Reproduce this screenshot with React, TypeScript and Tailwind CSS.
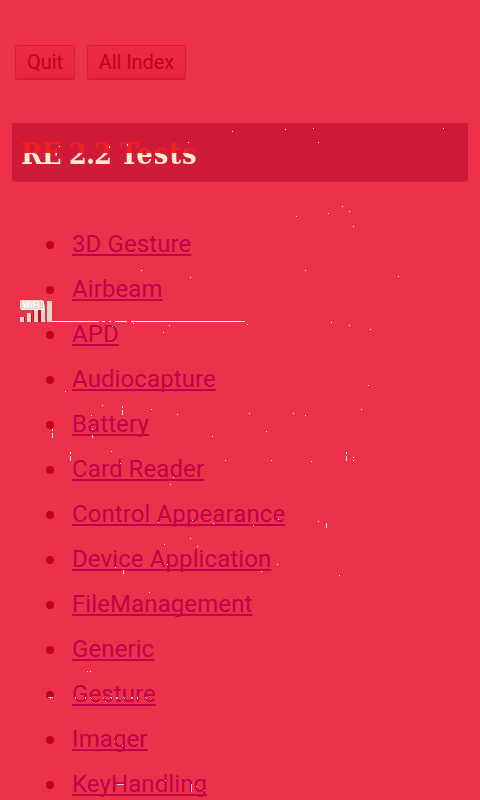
const links = [
  '3D Gesture', 'Airbeam', 'APD', 'Audiocapture', 'Battery', 'Card Reader', 'Control Appearance',
  'Device Application', 'FileManagement', 'Generic', 'Gesture', 'Imager', 'KeyHandling',
];

// Stray display pixels: x, y, width, height
const specks: number[][] = [
  [59,146,1,1],[109,146,1,2],[127,144,1,2],[188,142,1,1],[232,131,1,1],
  [285,129,1,1],[313,128,1,1],[318,142,1,1],[443,128,1,1],[342,206,1,1],[349,211,1,1],[328,213,1,1],[296,216,1,1],[353,226,1,1],
  [141,270,1,1],[190,277,1,1],[112,326,1,1],[133,323,1,1],[169,325,1,1],[163,332,1,1],
  [52,321,47,1],[102,321,3,1],[109,321,2,1],[115,321,12,1],[131,321,114,1],
  [305,270,1,1],[398,276,1,1],[247,324,1,1],[331,322,1,1],[349,325,1,1],[370,329,1,1],
  [65,391,1,1],[102,405,1,1],[122,406,1,2],[122,410,1,5],[151,409,1,1],[177,414,1,1],[91,415,1,1],[92,429,1,1],[92,435,1,3],
  [52,429,1,2],[52,433,1,5],[212,436,1,1],[111,451,1,1],[70,452,1,2],[70,456,1,5],[225,460,1,1],[120,463,1,1],[173,477,1,1],
  [368,385,1,1],[361,409,1,1],[249,413,1,1],[293,413,1,1],[305,415,1,1],[266,431,1,1],[271,460,1,1],[311,461,1,1],
  [346,452,1,2],[346,456,1,5],[353,457,1,1],[353,460,1,1],
  [170,484,1,1],[158,522,1,1],[192,520,1,1],[213,523,1,1],[190,538,1,1],[164,544,1,1],[197,546,1,1],[167,564,1,1],[115,567,1,1],[123,570,1,4],[149,592,1,1],
  [278,519,1,1],[253,525,1,1],[318,521,1,1],[326,523,1,5],[277,564,1,1],[261,571,1,1],[339,575,1,1],
  [87,671,1,1],[90,671,1,1],[48,697,5,1],[50,698,1,1],[75,697,1,2],[85,697,1,2],[90,697,1,1],[91,698,1,1],[103,698,1,1],[105,701,1,1],
  [110,697,2,1],[111,698,1,1],[116,697,2,2],[123,697,1,1],[124,698,1,1],[131,697,2,2],[137,697,1,2],[145,697,1,1],[146,698,1,1],
  [114,741,1,1],[122,745,1,1],[117,784,7,1],[165,780,1,1],[191,784,1,8],[196,786,1,1],[204,790,1,1],
];

function Button({ label, width }: { label: string; width: string }) {
  return (
    <button className={`${width} flex h-[35px] items-center justify-center rounded-[2px] border border-b-2 border-[#d91c36] bg-linear-to-b from-[#ed2b45] to-[#e9243d] pb-px text-[20px] leading-none tracking-[-0.08px] whitespace-nowrap text-[#c40018]`}>
      {label}
    </button>
  );
}

function WifiSignal() {
  return (
    <svg className="absolute top-[300px] left-5" width="34" height="22" shapeRendering="crispEdges">
      <g fill="#d9041f">
        <rect x="4" y="17" width="1" height="5" />
        <rect x="11" y="13" width="1" height="9" />
        <rect x="13" y="9" width="1" height="13" />
        <rect x="18" y="9" width="3" height="13" />
      </g>
      <g fill="#dfd8c9">
        <rect x="0" y="17" width="4" height="5" />
        <rect x="7" y="13" width="4" height="9" />
        <rect x="14" y="9" width="4" height="13" />
        <rect x="21" y="5" width="4" height="17" />
        <rect x="27" y="1" width="5" height="21" />
      </g>
      <rect x="1" y="1" width="23" height="9" fill="#fff" />
      <rect x="0" y="0" width="23" height="9" fill="#dfd8c9" />
      <text x="2.5" y="7.5" textLength="17" lengthAdjust="spacingAndGlyphs" fill="#fff" className="font-[Roboto] text-[8.5px] font-bold">WiFi</text>
    </svg>
  );
}

export default function App() {
  return (
    <main className="relative h-[800px] w-[480px] overflow-hidden bg-[#ee314b] px-3 pt-[45px] font-[Roboto,sans-serif]">
      <div className="ml-[3px] flex gap-3">
        <Button label="Quit" width="w-[60px]" />
        <Button label="All Index" width="w-[99px]" />
      </div>
      <h1 className="mt-[43px] flex h-[59px] items-start border-b border-[#d7213c] bg-[#cf1a39] pt-[13px] pl-[9px]">
        <span className="h-9 bg-linear-to-b from-[#f3211d] from-[17px] to-[#ffeacb] to-[17px] bg-clip-text font-['DejaVu_Serif_Condensed','DejaVu_Serif',serif] text-[29px] leading-[36px] font-bold tracking-[-0.95px] [font-stretch:condensed] whitespace-nowrap text-transparent">
          RE 2.2 <span className="tracking-[0.8px]">Tests</span>
        </span>
      </h1>
      <ul className="mt-[39px] ml-[34px]">
        {links.map((label) => (
          <li key={label} className="flex h-[45px] items-center gap-[18px]">
            <span className="mt-[3px] size-2 shrink-0 rounded-full bg-[#c30015]" />
            <a href="#" className="text-[24px] leading-[28px] tracking-[0.1px] whitespace-nowrap text-[#c5004a] underline decoration-[1.5px] underline-offset-[2px] [text-decoration-skip-ink:none]">{label}</a>
          </li>
        ))}
      </ul>
      <svg className="pointer-events-none absolute inset-0" width="480" height="800" shapeRendering="crispEdges">
        {specks.map(([x, y, w, h], i) => (
          <rect key={i} x={x} y={y} width={w} height={h} fill={y >= 690 ? '#dbcdf5' : '#fff4ef'} />
        ))}
      </svg>
      <WifiSignal />
    </main>
  );
}
